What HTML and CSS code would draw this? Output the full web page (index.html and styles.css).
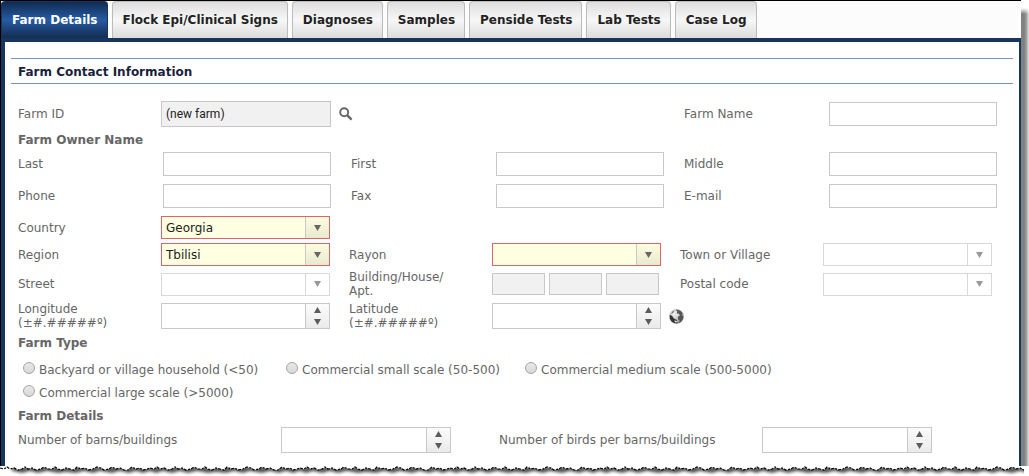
FILE: index.html
```html
<!DOCTYPE html>
<html lang="en">
<head>
<meta charset="utf-8">
<meta name="viewport" content="width=device-width, initial-scale=1">
<title>Farm Details</title>
<link rel="stylesheet" href="styles.css">
</head>
<body>
<div class="sheet">
  <div class="window">
    <nav class="tabs" role="tablist">
      <button class="tab tab-active" type="button" role="tab" aria-selected="true">Farm Details</button>
      <button class="tab" type="button" role="tab">Flock Epi/Clinical Signs</button>
      <button class="tab" type="button" role="tab">Diagnoses</button>
      <button class="tab" type="button" role="tab">Samples</button>
      <button class="tab" type="button" role="tab">Penside Tests</button>
      <button class="tab" type="button" role="tab">Lab Tests</button>
      <button class="tab" type="button" role="tab">Case Log</button>
    </nav>
    <main class="panel">
      <h1 class="title">Farm Contact Information</h1>
      <form class="form">
        <div class="farm-row">
          <label for="farm-id">Farm ID</label>
          <input class="text readonly" id="farm-id" type="text" value="(new farm)" readonly>
          <button class="icon-button search" type="button" aria-label="Search farm">
            <svg width="14" height="14" viewBox="0 0 14 14"><circle cx="5.2" cy="5.2" r="4" fill="none" stroke="#666" stroke-width="1.9"/><path d="M8.3 8.3L12.6 12.6" stroke="#666" stroke-width="2.4"/></svg>
          </button>
          <label for="farm-name">Farm Name</label>
          <input class="text" id="farm-name" type="text">
        </div>
        <h2 class="group">Farm Owner Name</h2>
        <div class="owner">
          <div class="field"><label for="last">Last</label><input class="text" id="last" type="text"></div>
          <div class="field"><label for="first">First</label><input class="text" id="first" type="text"></div>
          <div class="field"><label for="middle">Middle</label><input class="text" id="middle" type="text"></div>
          <div class="field"><label for="phone">Phone</label><input class="text" id="phone" type="text"></div>
          <div class="field"><label for="fax">Fax</label><input class="text" id="fax" type="text"></div>
          <div class="field"><label for="email">E-mail</label><input class="text" id="email" type="text"></div>
        </div>
        <div class="address">
          <div class="field field-first"><label for="country">Country</label><select class="combo required" id="country"><option>Georgia</option></select></div>
          <div class="field field-first"><label for="region">Region</label><select class="combo required" id="region"><option>Tbilisi</option></select></div>
          <div class="field"><label for="rayon">Rayon</label><select class="combo required" id="rayon"><option></option></select></div>
          <div class="field"><label for="town">Town or Village</label><select class="combo" id="town" disabled><option></option></select></div>
          <div class="field"><label for="street">Street</label><select class="combo" id="street" disabled><option></option></select></div>
          <div class="field">
            <label for="building">Building/House/<br>Apt.</label>
            <div class="parts">
              <input class="text readonly part" id="building" type="text" aria-label="Building" disabled>
              <input class="text readonly part" type="text" aria-label="House" disabled>
              <input class="text readonly part" type="text" aria-label="Apartment" disabled>
            </div>
          </div>
          <div class="field"><label for="postal">Postal code</label><select class="combo" id="postal" disabled><option></option></select></div>
          <div class="field">
            <label for="longitude">Longitude<br>(±#.#####º)</label>
            <div class="spinner"><input id="longitude" type="text"><span class="steps"><button type="button" class="step" aria-label="Increase longitude"><svg width="7" height="6" viewBox="0 0 7 6"><path d="M3.5 0L7 6H0Z"/></svg></button><button type="button" class="step" aria-label="Decrease longitude"><svg width="7" height="6" viewBox="0 0 7 6"><path d="M0 0H7L3.5 6Z"/></svg></button></span></div>
          </div>
          <div class="field">
            <label for="latitude">Latitude<br>(±#.#####º)</label>
            <div class="spinner"><input id="latitude" type="text"><span class="steps"><button type="button" class="step" aria-label="Increase latitude"><svg width="7" height="6" viewBox="0 0 7 6"><path d="M3.5 0L7 6H0Z"/></svg></button><button type="button" class="step" aria-label="Decrease latitude"><svg width="7" height="6" viewBox="0 0 7 6"><path d="M0 0H7L3.5 6Z"/></svg></button></span></div>
          </div>
          <button class="icon-button globe" type="button" aria-label="Show map">
            <svg width="15" height="15" viewBox="0 0 15 15">
              <defs><radialGradient id="sea" cx=".35" cy=".3" r=".8"><stop offset="0" stop-color="#f4f4f4"/><stop offset=".55" stop-color="#c4c4c4"/><stop offset="1" stop-color="#777"/></radialGradient></defs>
              <circle cx="7.5" cy="7.5" r="7" fill="url(#sea)" stroke="#999" stroke-width=".5"/>
              <path d="M6.5 .8C9.5 .2 12.5 2 13.8 4.6L12.6 6L14.4 7.5C14.3 10.5 12.7 13 10 14L10.6 11.4L8.8 10L9.2 7.6L11 6.4L9.8 4.6L7.6 4.4L8.4 2.6Z" fill="#555"/>
              <path d="M.9 5.8L3.2 7L4.8 9.6L8 11L7.6 12.6L9 14.2C5.4 15 1.6 12.8 .8 9Z" fill="#333"/>
              <path d="M3 2.8L5.4 1.4L4.6 3.4L2.4 5Z" fill="#777"/>
              <path d="M5 11.6L8 12L7 14Z" fill="#eee"/>
            </svg>
          </button>
        </div>
        <h2 class="group">Farm Type</h2>
        <div class="types" role="radiogroup" aria-label="Farm Type">
          <label class="choice"><input type="radio" name="type">Backyard or village household (&lt;50)</label>
          <label class="choice"><input type="radio" name="type">Commercial small scale (50-500)</label>
          <label class="choice"><input type="radio" name="type">Commercial medium scale (500-5000)</label>
          <label class="choice"><input type="radio" name="type">Commercial large scale (&gt;5000)</label>
        </div>
        <h2 class="group group-tight">Farm Details</h2>
        <div class="counts">
          <label for="barns">Number of barns/buildings</label>
          <div class="spinner"><input id="barns" type="text"><span class="steps"><button type="button" class="step" aria-label="More barns"><svg width="7" height="6" viewBox="0 0 7 6"><path d="M3.5 0L7 6H0Z"/></svg></button><button type="button" class="step" aria-label="Fewer barns"><svg width="7" height="6" viewBox="0 0 7 6"><path d="M0 0H7L3.5 6Z"/></svg></button></span></div>
          <label class="second" for="birds">Number of birds per barns/buildings</label>
          <div class="spinner"><input id="birds" type="text"><span class="steps"><button type="button" class="step" aria-label="More birds"><svg width="7" height="6" viewBox="0 0 7 6"><path d="M3.5 0L7 6H0Z"/></svg></button><button type="button" class="step" aria-label="Fewer birds"><svg width="7" height="6" viewBox="0 0 7 6"><path d="M0 0H7L3.5 6Z"/></svg></button></span></div>
        </div>
      </form>
    </main>
  </div>
  <div class="side-shadow"></div>
</div>
<svg class="torn" aria-hidden="true">
  <defs>
    <filter id="soft" x="-1%" y="-50%" width="102%" height="200%"><feGaussianBlur stdDeviation="1.5"/></filter>
    <pattern id="shade" width="150" height="12" patternUnits="userSpaceOnUse">
      <path d="M0 1H150V5L143 7L136 5L129 7L120 5L112 7L100 5L93 7L84 5L76 7L66 6L58 7L47 5L38 7L30 5L22 7L13 5L6 7L0 5Z" fill="#555"/>
    </pattern>
    <pattern id="edge" width="150" height="12" patternUnits="userSpaceOnUse">
      <path d="M0 0V2L4 3L7 1L10 3L14 2L18 4L22 3L25 1L28 3L32 2L36 4L41 3L44 1L48 3L52 3L55 1L58 3L62 4L66 2L70 3L74 4L77 1L81 3L85 2L88 4L93 3L97 1L101 2L104 4L109 3L112 1L116 3L120 2L124 4L128 4L132 1L136 3L140 2L143 4L147 3L150 2V0Z" fill="#fff"/>
      <path d="M0 2L4 3L7 1L10 3L14 2L18 4L22 3L25 1L28 3L32 2L36 4L41 3L44 1L48 3L52 3L55 1L58 3L62 4L66 2L70 3L74 4L77 1L81 3L85 2L88 4L93 3L97 1L101 2L104 4L109 3L112 1L116 3L120 2L124 4L128 4L132 1L136 3L140 2L143 4L147 3L150 2" fill="none" stroke="#000" stroke-width="1.2" stroke-dasharray="3 1.5 2 1"/>
    </pattern>
  </defs>
  <g filter="url(#soft)"><rect x="12" width="100%" height="12" fill="url(#shade)"/></g>
  <rect width="100%" height="12" fill="url(#edge)"/>
</svg>
</body>
</html>
```
FILE: styles.css
```css
* {
  box-sizing: border-box;
}

body {
  margin: 0;
  background: #fff;
  color: #666;
  font: 12px/14px Verdana, "DejaVu Sans", sans-serif;
}

input,
select,
button {
  margin: 0;
  min-width: 0;
  font: inherit;
  color: #222;
}

button {
  padding: 0;
  border: 0;
  background: none;
}

.sheet {
  display: grid;
  grid-template-columns: minmax(0, 1fr) 8px;
}

.window {
  border-top: 1px solid #000;
  border-left: 1px solid #000;
}

.side-shadow {
  margin-top: 8px;
  background: linear-gradient(90deg, #808080 0 3px, #969696 5px, #c8c8c8 7px, #ececec);
  mask-image: linear-gradient(transparent, #000 6px);
}

/* Tabs */
.tabs {
  display: flex;
  gap: 4px;
  height: 37px;
  background: #fcfcfc;
}

.tab {
  padding: 0 9px 0 10px;
  border: 1px solid #bbb;
  border-width: 1px 1px 0;
  border-radius: 4px 4px 0 0;
  background: linear-gradient(#dedede, #f7f7f7 50%, #dcdcdc);
  font-weight: bold;
  white-space: nowrap;
}

.tab-active {
  border-color: #16365f;
  background: linear-gradient(#112b52, #265ba3 50%, #142c50);
  color: #fff;
}

/* Panel */
.panel {
  padding: 16px 0 13px;
  border: solid #16365f;
  border-width: 4px 2px 0 4px;
  background: #fff;
}

.title {
  height: 26px;
  margin: 0 6px 17px;
  padding-left: 7px;
  border: solid #7396c0;
  border-width: 1px 0;
  color: #1a1f3d;
  font-size: 12px;
  line-height: 26px;
}

.form {
  padding: 0 22px 0 13px;
}

.group {
  margin: 0;
  padding-top: 2px;
  font-size: 12px;
  line-height: 23px;
}

.group-tight {
  line-height: 21px;
}

.text {
  width: 100%;
  height: 24px;
  padding: 0 4px;
  border: 1px solid #c8c8c8;
  background: #fff;
}

.readonly {
  background: #f1f1f1;
  font-family: Roboto, "Liberation Sans", sans-serif;
}

.icon-button {
  display: flex;
  align-items: center;
}

.farm-row {
  display: grid;
  grid-template-columns: 143fr 170fr 353fr 145fr 168fr;
  align-items: center;
}

.farm-row .readonly {
  height: 26px;
}

.search {
  justify-self: start;
  padding-left: 8px;
}

.owner {
  display: grid;
  grid-template-columns: repeat(3, minmax(0, 1fr));
  gap: 8px 20px;
}

.field {
  display: grid;
  grid-template-columns: 145px minmax(0, 1fr);
  align-items: center;
}

.address {
  display: grid;
  grid-template-columns: repeat(3, minmax(0, 1fr));
  gap: 4px 19px;
  margin: 8px 5px 0 0;
}

.address .field {
  grid-template-columns: 143px minmax(0, 1fr);
}

.field-first {
  grid-column: 1;
}

.combo {
  width: 100%;
  height: 23px;
  padding: 0 26px 0 4px;
  border: 1px solid #d8d8d8;
  border-radius: 0;
  appearance: none;
  background:
    url("data:image/svg+xml,%3Csvg xmlns='http://www.w3.org/2000/svg' width='7' height='6'%3E%3Cpath d='M0 0H7L3.5 6Z' fill='%23999'/%3E%3C/svg%3E") no-repeat right 8px center,
    linear-gradient(#d8d8d8, #d8d8d8) no-repeat right 23px top / 1px 100%,
    #fff;
  opacity: 1;
}

.required {
  border-color: #df6368;
  background:
    url("data:image/svg+xml,%3Csvg xmlns='http://www.w3.org/2000/svg' width='7' height='6'%3E%3Cpath d='M0 0H7L3.5 6Z' fill='%23666'/%3E%3C/svg%3E") no-repeat right 8px center,
    linear-gradient(#c8c8c8, #c8c8c8) no-repeat right 23px top / 1px 100%,
    linear-gradient(#fdfde0, #e9e9cf) no-repeat right top / 23px 100%,
    #ffffe1;
}

.parts {
  display: grid;
  grid-template-columns: repeat(3, 1fr);
  gap: 4px;
  padding-right: 2px;
}

.part {
  height: 22px;
}

.spinner {
  display: flex;
  min-width: 0;
  height: 26px;
  border: 1px solid #c8c8c8;
}

.spinner input {
  flex: 1;
  width: 0;
  padding: 0 4px;
  border: 0;
  background: #fff;
}

.steps {
  display: grid;
  grid-template-rows: 1fr 1fr;
  width: 24px;
  border-left: 1px solid #c8c8c8;
  background: linear-gradient(#fcfcfc, #eaeaea);
}

.step {
  display: grid;
  place-items: center;
  fill: #5c5c5c;
}

.globe {
  justify-self: start;
  margin-left: -11px;
}

.types {
  display: grid;
  grid-template-columns: 263px 239px max-content;
  margin-top: 3px;
  padding-left: 5px;
}

.choice {
  display: flex;
  align-items: center;
  gap: 4px;
  height: 23px;
  white-space: nowrap;
}

.choice input {
  width: 12px;
  height: 12px;
  margin-bottom: 4px;
  border: 1px solid #a5a5a5;
  border-radius: 50%;
  appearance: none;
  background: linear-gradient(#e9e9e9, #d8d8d8);
}

.choice input:checked {
  background: radial-gradient(#555 0 3px, #e0e0e0 4px);
}

.counts {
  display: grid;
  grid-template-columns: 263fr 170fr 48fr 263fr 170fr 65fr;
  align-items: center;
}

.second {
  grid-column: 4;
}

.torn {
  display: block;
  width: calc(100% - 5px);
  height: 10px;
}
```
